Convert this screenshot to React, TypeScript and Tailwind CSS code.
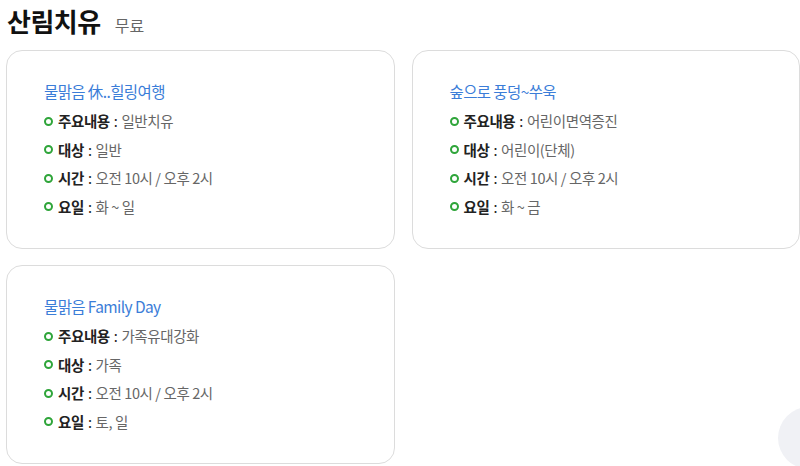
const programs = [
  {
    title: '물맑음 休..힐링여행',
    items: [
      ['주요내용', '일반치유'],
      ['대상', '일반'],
      ['시간', '오전 10시 / 오후 2시'],
      ['요일', '화 ~ 일'],
    ],
  },
  {
    title: '숲으로 풍덩~쑤욱',
    items: [
      ['주요내용', '어린이면역증진'],
      ['대상', '어린이(단체)'],
      ['시간', '오전 10시 / 오후 2시'],
      ['요일', '화 ~ 금'],
    ],
  },
  {
    title: '물맑음 Family Day',
    items: [
      ['주요내용', '가족유대강화'],
      ['대상', '가족'],
      ['시간', '오전 10시 / 오후 2시'],
      ['요일', '토, 일'],
    ],
  },
]

function ProgramCard({ title, items }: { title: string; items: string[][] }) {
  return (
    <div className="h-[199px] rounded-[16px] border border-[#dcdcdc] bg-white pl-[37px] pt-[28px]">
      <h3 className="text-[15.5px] leading-[24px] text-[#3b7dd8] tracking-[-0.6px]">{title}</h3>
      <ul className="mt-[6px] flex flex-col gap-[4.5px]">
        {items.map(([label, value]) => (
          <li key={label} className="flex items-center h-[24px] text-[14.5px] tracking-[-0.4px]">
            <span className="mr-[5px] inline-block h-[9px] w-[9px] rounded-full border-[2.5px] border-[#2fa53a]" />
            <span className="font-bold text-[#222]">{label}</span>
            <span className="text-[#222] ml-[4px] mr-[4px]">:</span>
            <span className="text-[#666]">{value}</span>
          </li>
        ))}
      </ul>
    </div>
  )
}

export default function App() {
  return (
    <div
      className="relative h-[466px] w-[800px] overflow-hidden bg-white pl-[6px]"
      style={{ fontFamily: '"Noto Sans CJK KR", "Noto Sans", sans-serif' }}
    >
      <div className="flex items-baseline pt-[2px] pl-[1px] h-[50px]">
        <h2 className="text-[26px] font-bold leading-[38px] text-[#111] tracking-[-0.5px]">산림치유</h2>
        <span className="ml-[14px] text-[16px] text-[#666]">무료</span>
      </div>
      <div className="grid grid-cols-2 gap-x-[17px] gap-y-[16px]">
        {programs.map((p) => (
          <ProgramCard key={p.title} title={p.title} items={p.items} />
        ))}
      </div>
      <div className="absolute left-[778px] top-[407px] h-[62px] w-[62px] rounded-full bg-[#f0f1f5]" />
    </div>
  )
}
